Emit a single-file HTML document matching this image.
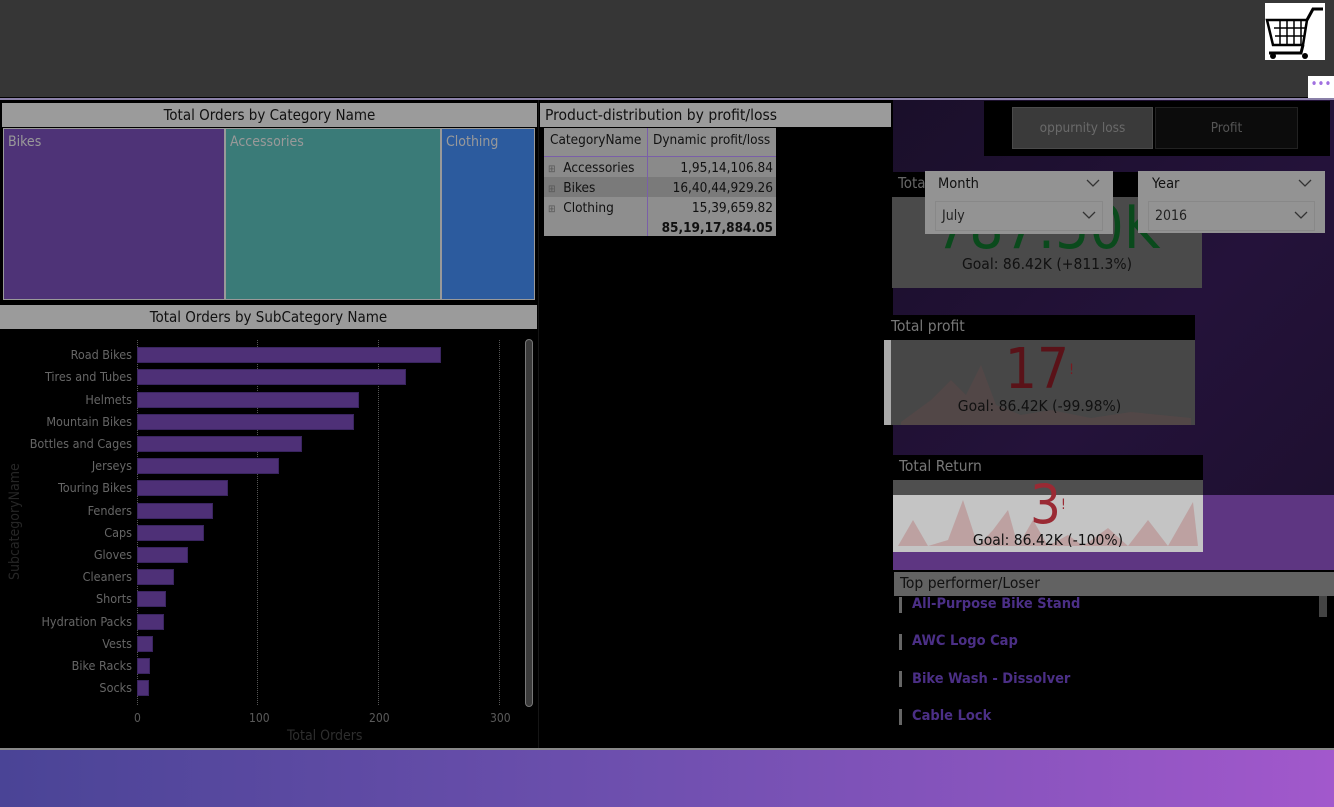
<!DOCTYPE html>
<html><head><meta charset="utf-8"><style>
*{margin:0;padding:0;box-sizing:border-box}
body{width:1334px;height:807px;overflow:hidden;background:#000;font-family:"DejaVu Sans Condensed","Liberation Sans",sans-serif;position:relative}
.a{position:absolute}
.hdr{background:#9b9b9b;color:#111;font-size:15px;text-align:center;line-height:24px}
.lbl{font-size:12.5px;color:#666;text-align:right;width:130px;left:2px}
.bar{background:#4e3077;left:137px;height:16px;border:1px solid #3a2560}
.tick{font-size:12px;color:#5a5a5a}
.td{font-size:13.5px;color:#111;line-height:20px}
.prod{color:#4b2f86;font-size:14.5px;font-weight:bold;left:912px}
.pb{left:899px;width:3px;height:16px;background:#666}
.chev{position:absolute}
</style></head><body>
<div class="a" style="left:0;top:0;width:1334px;height:97px;background:#363636"></div>
<div class="a" style="left:1265px;top:3px;width:60px;height:57px;background:#fff">
<svg width="60" height="57" viewBox="0 0 60 57"><g fill="none" stroke="#000" stroke-width="3"><path d="M2 17H42L38 42H8Z" stroke-width="2.5"/><path d="M42 17 48 6H58" /><path d="M38 42 36 50H4"/></g><g stroke="#000" stroke-width="1.5"><path d="M9 25H41M10 33H40M15 17V42M22 17V42M29 17V42M36 17V42"/></g><circle cx="8" cy="53" r="3" fill="#000"/><circle cx="40" cy="53" r="3" fill="#000"/></svg></div>
<div class="a" style="left:1308px;top:76px;width:26px;height:22px;background:#fff;color:#a070e0;font-size:13px;text-align:center;line-height:18px">•••</div>
<div class="a" style="left:0;top:98px;width:1334px;height:2px;background:#8a80a8"></div>
<div class="a" style="left:893px;top:100px;width:441px;height:395px;background:linear-gradient(135deg,#1a0f2a,#24123a 60%,#1e1030)"></div>
<div class="a" style="left:893px;top:495px;width:441px;height:75px;background:#5e3682"></div>
<div class="a hdr" style="left:2px;top:103px;width:535px">Total Orders by Category Name</div>
<div class="a" style="left:3px;top:128px;width:532px;height:172px;background:#999"></div>
<div class="a" style="left:4px;top:129px;width:220px;height:170px;background:#4e3377;color:#999;font-size:14px;padding:5px 4px">Bikes</div>
<div class="a" style="left:226px;top:129px;width:214px;height:170px;background:#3a7b78;color:#999;font-size:14px;padding:5px 4px">Accessories</div>
<div class="a" style="left:442px;top:129px;width:92px;height:170px;background:#2c5b9e;color:#999;font-size:14px;padding:5px 4px">Clothing</div>
<div class="a hdr" style="left:0;top:305px;width:537px">Total Orders by SubCategory Name</div>
<div class="a" style="left:137px;top:340px;width:0;height:365px;border-left:1px dotted #555"></div>
<div class="a" style="left:257px;top:340px;width:0;height:365px;border-left:1px dotted #555"></div>
<div class="a" style="left:378px;top:340px;width:0;height:365px;border-left:1px dotted #555"></div>
<div class="a" style="left:499px;top:340px;width:0;height:365px;border-left:1px dotted #555"></div>
<div class="a lbl" style="top:347px">Road Bikes</div><div class="a bar" style="top:347px;width:304px"></div>
<div class="a lbl" style="top:369px">Tires and Tubes</div><div class="a bar" style="top:369px;width:269px"></div>
<div class="a lbl" style="top:392px">Helmets</div><div class="a bar" style="top:392px;width:222px"></div>
<div class="a lbl" style="top:414px">Mountain Bikes</div><div class="a bar" style="top:414px;width:217px"></div>
<div class="a lbl" style="top:436px">Bottles and Cages</div><div class="a bar" style="top:436px;width:165px"></div>
<div class="a lbl" style="top:458px">Jerseys</div><div class="a bar" style="top:458px;width:142px"></div>
<div class="a lbl" style="top:480px">Touring Bikes</div><div class="a bar" style="top:480px;width:91px"></div>
<div class="a lbl" style="top:503px">Fenders</div><div class="a bar" style="top:503px;width:76px"></div>
<div class="a lbl" style="top:525px">Caps</div><div class="a bar" style="top:525px;width:67px"></div>
<div class="a lbl" style="top:547px">Gloves</div><div class="a bar" style="top:547px;width:51px"></div>
<div class="a lbl" style="top:569px">Cleaners</div><div class="a bar" style="top:569px;width:37px"></div>
<div class="a lbl" style="top:591px">Shorts</div><div class="a bar" style="top:591px;width:29px"></div>
<div class="a lbl" style="top:614px">Hydration Packs</div><div class="a bar" style="top:614px;width:27px"></div>
<div class="a lbl" style="top:636px">Vests</div><div class="a bar" style="top:636px;width:16px"></div>
<div class="a lbl" style="top:658px">Bike Racks</div><div class="a bar" style="top:658px;width:13px"></div>
<div class="a lbl" style="top:680px">Socks</div><div class="a bar" style="top:680px;width:12px"></div>
<div class="a tick" style="left:134px;top:711px">0</div>
<div class="a tick" style="left:249px;top:711px">100</div>
<div class="a tick" style="left:369px;top:711px">200</div>
<div class="a tick" style="left:490px;top:711px">300</div>
<div class="a" style="left:287px;top:728px;font-size:14px;color:#2e2e2e">Total Orders</div>
<div class="a" style="left:-45px;top:512px;font-size:14px;color:#262626;transform:rotate(-90deg);width:120px">SubcategoryName</div>
<div class="a" style="left:525px;top:339px;width:8px;height:368px;border:1px solid #777;border-radius:4px;background:#3a3a3a"></div>
<div class="a hdr" style="left:540px;top:103px;width:351px;text-align:left;padding-left:5px;font-size:15.5px">Product-distribution by profit/loss</div>
<div class="a" style="left:544px;top:128px;width:232px;height:108px;background:#8e8e8e"></div>
<div class="a" style="left:544px;top:157px;width:232px;height:20px;background:#8a8a8a"></div>
<div class="a" style="left:544px;top:177px;width:232px;height:20px;background:#7a7a7a"></div>
<div class="a" style="left:647px;top:128px;width:1px;height:108px;background:#7a5fa8"></div>
<div class="a" style="left:544px;top:156px;width:232px;height:1px;background:#7a5fa8"></div>
<div class="a td" style="left:550px;top:130px">CategoryName</div>
<div class="a td" style="left:653px;top:130px">Dynamic profit/loss</div>
<div class="a td" style="left:548px;top:158px;width:96px"><span style="font-size:10px;color:#555">⊞</span>&nbsp; Accessories</div>
<div class="a td" style="left:548px;top:178px"><span style="font-size:10px;color:#555">⊞</span>&nbsp; Bikes</div>
<div class="a td" style="left:548px;top:198px"><span style="font-size:10px;color:#555">⊞</span>&nbsp; Clothing</div>
<div class="a td" style="left:648px;top:158px;width:125px;text-align:right">1,95,14,106.84</div>
<div class="a td" style="left:648px;top:178px;width:125px;text-align:right">16,40,44,929.26</div>
<div class="a td" style="left:648px;top:198px;width:125px;text-align:right">15,39,659.82</div>
<div class="a td" style="left:648px;top:218px;width:125px;text-align:right;font-weight:bold">85,19,17,884.05</div>
<div class="a" style="left:984px;top:101px;width:346px;height:55px;background:#000"></div>
<div class="a" style="left:1012px;top:107px;width:141px;height:42px;background:#3a3a3a;border:1px solid #4a4a4a;color:#6a6a6a;font-size:13.5px;text-align:center;line-height:40px">oppurnity loss</div>
<div class="a" style="left:1155px;top:107px;width:143px;height:42px;background:#0c0c0c;border:1px solid #222;color:#555;font-size:13.5px;text-align:center;line-height:40px">Profit</div>
<!-- KPI 1 -->
<div class="a" style="left:892px;top:172px;width:310px;height:25px;background:#000;color:#666;font-size:15px;padding:2px 6px">Total</div>
<div class="a" style="left:892px;top:197px;width:310px;height:91px;background:#4a4a4a;overflow:hidden"><div style="color:#0a4a1c;font-size:60px;text-align:center;margin-top:0;line-height:62px">787.50K</div><div style="text-align:center;font-size:15.5px;color:#111;margin-top:-4px">Goal: 86.42K (+811.3%)</div></div>
<div class="a" style="left:925px;top:171px;width:188px;height:63px;background:#939393"></div>
<div class="a" style="left:938px;top:176px;font-size:14.5px;color:#111">Month</div>
<svg class="chev" style="left:1086px;top:178px" width="14" height="10"><path d="M1 2 7 8 13 2" fill="none" stroke="#333" stroke-width="1.3"/></svg>
<div class="a" style="left:935px;top:201px;width:168px;height:30px;border:1px solid #888;color:#222;font-size:14px;padding:6px 6px">July</div>
<svg class="chev" style="left:1082px;top:210px" width="14" height="10"><path d="M1 2 7 8 13 2" fill="none" stroke="#333" stroke-width="1.3"/></svg>
<div class="a" style="left:1138px;top:171px;width:187px;height:62px;background:#939393"></div>
<div class="a" style="left:1152px;top:176px;font-size:14.5px;color:#111">Year</div>
<svg class="chev" style="left:1298px;top:178px" width="14" height="10"><path d="M1 2 7 8 13 2" fill="none" stroke="#333" stroke-width="1.3"/></svg>
<div class="a" style="left:1148px;top:201px;width:167px;height:30px;border:1px solid #888;color:#222;font-size:14px;padding:6px 6px">2016</div>
<svg class="chev" style="left:1294px;top:210px" width="14" height="10"><path d="M1 2 7 8 13 2" fill="none" stroke="#333" stroke-width="1.3"/></svg>
<!-- KPI 2 -->
<div class="a" style="left:888px;top:315px;width:307px;height:25px;background:#000;color:#777;font-size:15.5px;padding:2px 3px">Total profit</div>
<div class="a" style="left:884px;top:340px;width:311px;height:85px;background:#474747"></div>
<svg class="a" style="left:891px;top:340px" width="304" height="85"><path d="M10 82 40 60 60 40 75 55 90 25 105 65 130 75 160 70 200 78 240 72 300 78V85H10Z" fill="#5a4848" opacity=".6"/></svg>
<div class="a" style="left:884px;top:340px;width:311px;text-align:center;color:#5a1218;font-size:56px;line-height:60px">17<span style="font-size:14px;vertical-align:top;color:#7a1a20">!</span></div>
<div class="a" style="left:884px;top:397px;width:311px;text-align:center;font-size:15.5px;color:#111">Goal: 86.42K (-99.98%)</div>
<div class="a" style="left:884px;top:340px;width:7px;height:85px;background:#aaa"></div>
<!-- KPI 3 -->
<div class="a" style="left:893px;top:455px;width:310px;height:25px;background:#000;color:#777;font-size:15.5px;padding:2px 6px">Total Return</div>
<div class="a" style="left:893px;top:480px;width:310px;height:15px;background:#4f4f4f"></div>
<div class="a" style="left:893px;top:495px;width:310px;height:57px;background:#c4c4c4"></div>
<svg class="a" style="left:893px;top:480px" width="310" height="72"><path d="M5 66 20 40 35 66 55 60 70 20 85 66 100 50 115 30 125 66 140 40 155 66 175 55 190 66 215 48 235 66 255 40 275 66 300 22 305 66Z" fill="#b98a8a" opacity=".6"/></svg>
<div class="a" style="left:893px;top:476px;width:310px;text-align:center;color:#9a2a34;font-size:54px;line-height:58px">3<span style="font-size:14px;vertical-align:top">!</span></div>
<div class="a" style="left:893px;top:531px;width:310px;text-align:center;font-size:15.5px;color:#111">Goal: 86.42K (-100%)</div>
<div class="a" style="left:893px;top:570px;width:441px;height:2px;background:#000"></div>
<div class="a" style="left:894px;top:572px;width:440px;height:24px;background:#626262;color:#111;font-size:15.5px;padding:2px 6px">Top performer/Loser</div>
<div class="a" style="left:893px;top:596px;width:437px;height:152px;background:#000"></div>
<div class="a" style="left:1319px;top:596px;width:8px;height:21px;background:#444"></div>
<div class="a pb" style="top:597px"></div><div class="a prod" style="top:596px">All-Purpose Bike Stand</div>
<div class="a pb" style="top:634px"></div><div class="a prod" style="top:633px">AWC Logo Cap</div>
<div class="a pb" style="top:671px"></div><div class="a prod" style="top:671px">Bike Wash - Dissolver</div>
<div class="a pb" style="top:709px"></div><div class="a prod" style="top:708px">Cable Lock</div>
<div class="a" style="left:538px;top:100px;width:1px;height:648px;background:#151515"></div>
<div class="a" style="left:0;top:748px;width:1334px;height:2px;background:#888"></div>
<div class="a" style="left:0;top:750px;width:1334px;height:57px;background:linear-gradient(90deg,#4a4496,#7050b0 50%,#a258cc)"></div>
</body></html>
